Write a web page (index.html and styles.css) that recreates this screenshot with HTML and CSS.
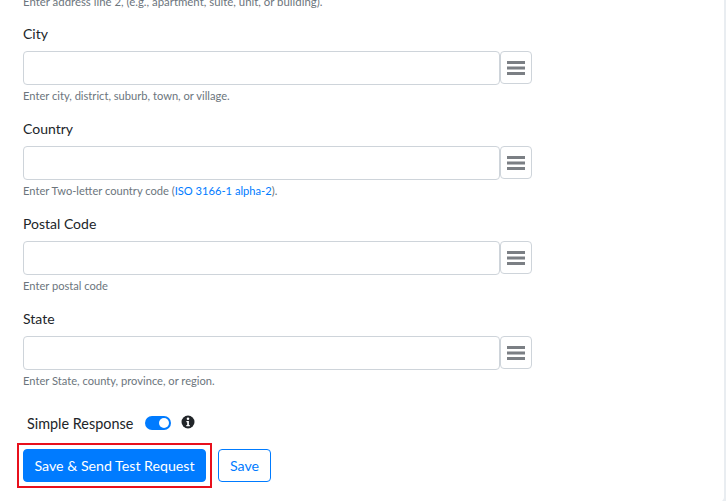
FILE: index.html
```html
<!DOCTYPE html>
<html lang="en">
<head>
<meta charset="utf-8">
<title>Address form</title>
<link rel="stylesheet" href="styles.css">
</head>
<body>
<main class="card">
  <p class="hint hint-top">Enter address line 2, (e.g., apartment, suite, unit, or building).</p>
  <div class="field">
    <label class="label">City</label>
    <div class="input-row">
      <input class="input" type="text">
      <button class="menu-btn" type="button" aria-label="Menu"><svg viewBox="0 0 18 14" width="18" height="14"><path d="M0 1.5h18M0 7h18M0 12.5h18"/></svg></button>
    </div>
    <p class="hint">Enter city, district, suburb, town, or village.</p>
  </div>
  <div class="field">
    <label class="label">Country</label>
    <div class="input-row">
      <input class="input" type="text">
      <button class="menu-btn" type="button" aria-label="Menu"><svg viewBox="0 0 18 14" width="18" height="14"><path d="M0 1.5h18M0 7h18M0 12.5h18"/></svg></button>
    </div>
    <p class="hint">Enter Two-letter country code (<a class="link" href="#">ISO 3166-1 alpha-2</a>).</p>
  </div>
  <div class="field">
    <label class="label">Postal Code</label>
    <div class="input-row">
      <input class="input" type="text">
      <button class="menu-btn" type="button" aria-label="Menu"><svg viewBox="0 0 18 14" width="18" height="14"><path d="M0 1.5h18M0 7h18M0 12.5h18"/></svg></button>
    </div>
    <p class="hint">Enter postal code</p>
  </div>
  <div class="field">
    <label class="label">State</label>
    <div class="input-row">
      <input class="input" type="text">
      <button class="menu-btn" type="button" aria-label="Menu"><svg viewBox="0 0 18 14" width="18" height="14"><path d="M0 1.5h18M0 7h18M0 12.5h18"/></svg></button>
    </div>
    <p class="hint">Enter State, county, province, or region.</p>
  </div>
  <div class="toggle-row">
    <span class="toggle-label">Simple Response</span>
    <span class="switch"><span class="knob"></span></span>
    <svg class="info" viewBox="0 0 14 14" width="14" height="14"><circle cx="7" cy="7" r="6.5" fill="#212529"/><circle cx="7" cy="3.8" r="1.3" fill="#fff"/><path d="M5.4 6h2.5v4.1h.9v1.2H5.3v-1.2h.9V7.2h-.8z" fill="#fff"/></svg>
  </div>
  <div class="actions">
    <div class="highlight"><button class="btn btn-primary" type="button">Save &amp; Send Test Request</button></div>
    <button class="btn btn-outline" type="button">Save</button>
  </div>
</main>
</body>
</html>
```
FILE: styles.css
```css
html, body {
  margin: 0;
  height: 501px;
  overflow: hidden;
  background: #e9edf1;
}
body {
  font-family: "Lato", "Noto Sans", sans-serif;
  color: #212529;
}
.card {
  width: 724px;
  height: 506px;
  margin-top: -7px;
  box-sizing: border-box;
  padding: 0 0 0 23px;
  background: #fff;
  border-radius: 0 0 5px 0;
}
.hint {
  margin: 5px 0 0;
  font-size: 11.15px;
  line-height: 12px;
  color: #6c757d;
}
.hint-top { margin: 3px 0 0; font-size: 11.4px; }
.field { margin-top: 16px; height: 79px; }
.label {
  display: block;
  font-size: 14px;
  line-height: 20px;
  margin-bottom: 7px;
}
.input-row { display: flex; align-items: flex-start; }
.input {
  width: 477px;
  height: 34px;
  box-sizing: border-box;
  border: 1px solid #ced4da;
  border-radius: 4px;
  background: #fff;
  padding: 0 8px;
  outline: none;
}
.menu-btn {
  width: 32px;
  height: 33px;
  padding: 0;
  box-sizing: border-box;
  background: #fff;
  border: 1px solid #ced4da;
  border-radius: 4px;
  display: flex;
  align-items: center;
  justify-content: center;
}
.menu-btn path { stroke: #7b7f84; stroke-width: 3; fill: none; }
.link { color: #007bff; text-decoration: none; }
.toggle-row {
  display: flex;
  align-items: center;
  margin: 25px 0 0 4px;
  height: 20px;
}
.toggle-label { font-size: 14.4px; }
.switch {
  width: 26px;
  height: 14px;
  margin-left: 12px;
  border-radius: 7px;
  background: #007bff;
  position: relative;
}
.knob {
  position: absolute;
  right: 2px;
  top: 2px;
  width: 10px;
  height: 10px;
  border-radius: 50%;
  background: #fff;
}
.info { margin-left: 10px; margin-top: -2px; }
.actions {
  display: flex;
  align-items: center;
  margin: 10px 0 0 -6px;
}
.highlight {
  border: 2px solid #e8101c;
  padding: 4px;
  display: flex;
}
.btn {
  font-family: inherit;
  font-size: 14.2px;
  height: 33px;
  border-radius: 4px;
  box-sizing: border-box;
}
.btn-primary {
  width: 183px;
  padding: 0;
  background: #007bff;
  border: 1px solid #007bff;
  color: #fff;
}
.btn-outline {
  width: 53px;
  padding: 0;
  margin-left: 6px;
  background: #fff;
  border: 1px solid #007bff;
  color: #007bff;
}
```
